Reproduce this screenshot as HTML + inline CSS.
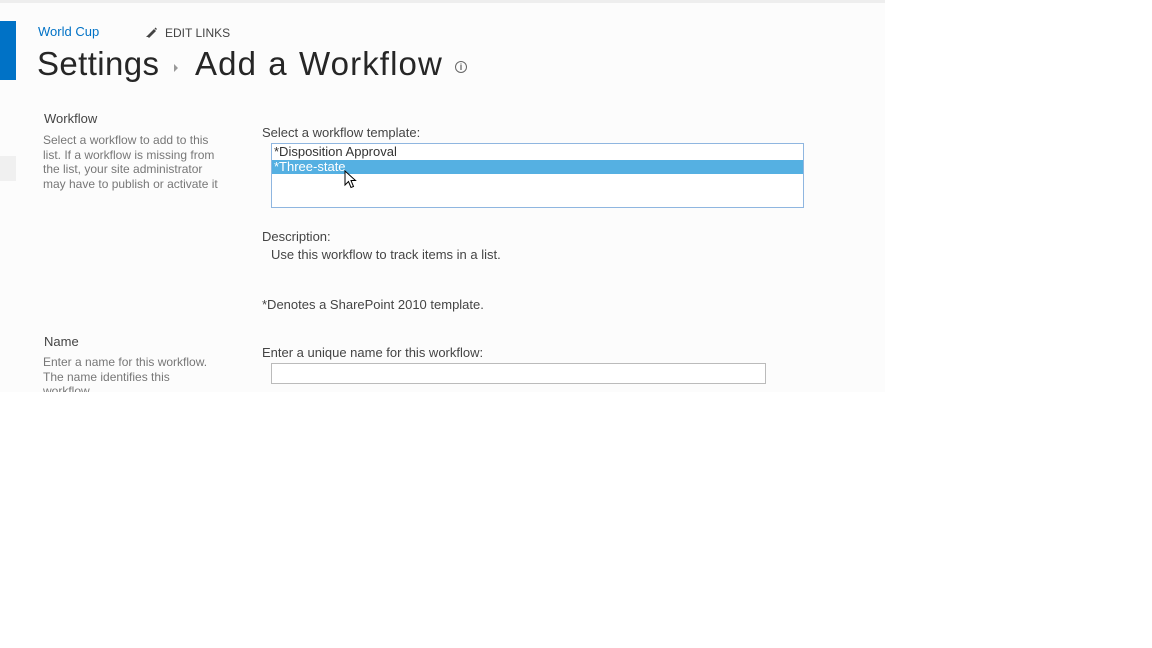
<!DOCTYPE html>
<html><head><meta charset="utf-8"><style>
html,body{margin:0;padding:0;width:1152px;height:648px;background:#fff;overflow:hidden;font-family:"Liberation Sans",sans-serif;}
.page{position:absolute;left:0;top:0;width:885px;height:392px;background:#fcfcfc;overflow:hidden;}
.topbar{position:absolute;left:0;top:0;width:885px;height:3px;background:#eeeeee;}
.a{position:absolute;white-space:nowrap;}
</style></head><body>
<div class="page">
<div class="topbar"></div>
<div class="a" style="left:0;top:21px;width:16px;height:59px;background:#0072c6"></div>
<div class="a" style="left:0;top:156px;width:16px;height:25px;background:#f0f0f0"></div>
<div class="a" style="left:38px;top:24px;font-size:13px;color:#0072c6">World Cup</div>
<svg class="a" style="left:145px;top:26px" width="13" height="12" viewBox="0 0 13 12"><path d="M2 10 L9 3 L11 5 L4 12 Z M1 11 L2 10 L3 11 Z" fill="#444"/><path d="M9.5 2.5 L10.5 1.5 L12 3 L11 4 Z" fill="#444"/></svg>
<div class="a" style="left:165px;top:26px;font-size:12px;color:#444">EDIT LINKS</div>
<div class="a" style="left:37px;top:45px;font-size:33px;color:#262626;letter-spacing:0.4px">Settings</div>
<div class="a" style="left:174px;top:64px;width:0;height:0;border-left:4px solid #999;border-top:4px solid transparent;border-bottom:4px solid transparent"></div>
<div class="a" style="left:195px;top:45px;font-size:33px;color:#262626;letter-spacing:1.1px;word-spacing:1px">Add a Workflow</div>
<div class="a" style="left:455px;top:61px;width:10px;height:10px;border:1.3px solid #666;border-radius:50%;font-size:9px;line-height:10px;text-align:center;color:#666;font-weight:bold">i</div>
<div class="a" style="left:44px;top:111px;font-size:13px;color:#444">Workflow</div>
<div class="a" style="left:43px;top:133px;font-size:12px;line-height:14.5px;color:#777">Select a workflow to add to this<br>list. If a workflow is missing from<br>the list, your site administrator<br>may have to publish or activate it</div>
<div class="a" style="left:262px;top:125px;font-size:13px;color:#444">Select a workflow template:</div>
<div class="a" style="left:271px;top:143px;width:531px;height:63px;border:1px solid #8fb6e0;background:#fff">
 <div style="height:16px;font-size:13px;line-height:15px;color:#333;padding-left:2px">*Disposition Approval</div>
 <div style="height:14px;font-size:13px;line-height:14px;color:#fff;background:#55b0e2;padding-left:2px">*Three-state</div>
</div>
<svg class="a" style="left:344px;top:170px" width="14" height="20" viewBox="0 0 14 20"><path d="M1 1 L1 15 L4.5 11.5 L7 17.5 L9.5 16.5 L7 10.5 L11.5 10.5 Z" fill="#fff" stroke="#000" stroke-width="1"/></svg>
<div class="a" style="left:262px;top:229px;font-size:13px;color:#444">Description:</div>
<div class="a" style="left:271px;top:247px;font-size:13px;color:#444">Use this workflow to track items in a list.</div>
<div class="a" style="left:262px;top:297px;font-size:13px;color:#444">*Denotes a SharePoint 2010 template.</div>
<div class="a" style="left:44px;top:334px;font-size:13px;color:#444">Name</div>
<div class="a" style="left:43px;top:355px;font-size:12px;line-height:14.5px;color:#777">Enter a name for this workflow.<br>The name identifies this<br>workflow</div>
<div class="a" style="left:262px;top:345px;font-size:13px;color:#444">Enter a unique name for this workflow:</div>
<div class="a" style="left:271px;top:363px;width:493px;height:19px;border:1px solid #bbb;background:#fff"></div>
</div>
</body></html>
